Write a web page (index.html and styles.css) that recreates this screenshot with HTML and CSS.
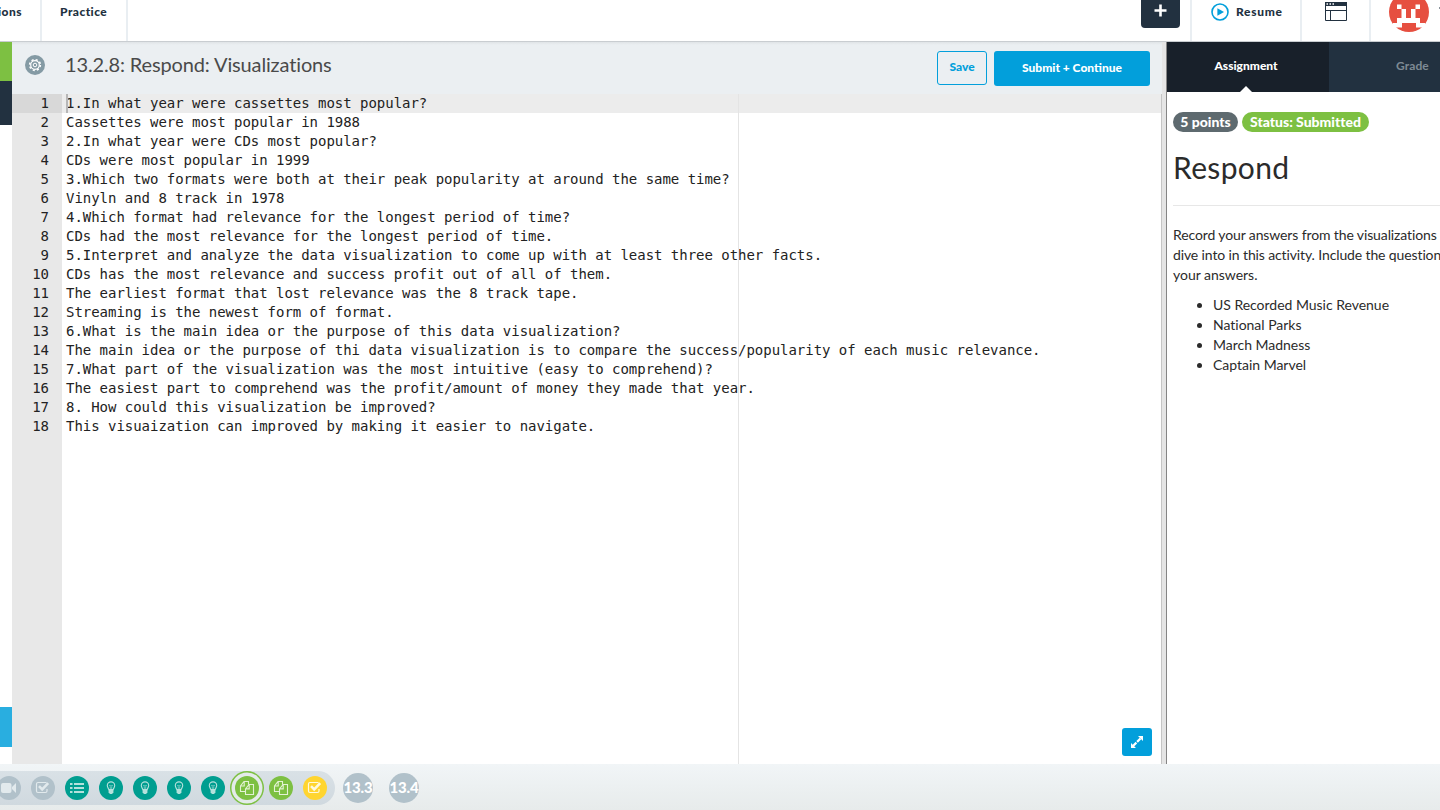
FILE: index.html
```html
<!DOCTYPE html>
<html lang="en">
<head>
<meta charset="utf-8">
<title>13.2.8: Respond: Visualizations</title>
<link rel="stylesheet" href="styles.css">
</head>
<body>
<svg class="defs" width="0" height="0">
  <symbol id="bulb" viewBox="0 0 24 24">
    <path d="M9.800 13.600C9.600 12.200 8.300 11.600 8.300 9.600a3.700 3.700 0 0 1 7.400 0c0 2-1.300 2.600-1.500 4z" fill="none" stroke="currentColor" stroke-width="1.100"/>
    <path d="M10.200 9.200l1 1 .8-1 .8 1 1-1M11.300 10.500v3M12.700 10.500v3" fill="none" stroke="currentColor" stroke-width=".6"/>
    <path d="M9.600 14h4.800v2.500l-1.400 1.400h-2l-1.400-1.400z" fill="currentColor"/>
  </symbol>
  <symbol id="check" viewBox="0 0 24 24">
    <path d="M15.500 6.500H7A1.500 1.500 0 0 0 5.500 8v7A1.500 1.500 0 0 0 7 16.500h7.500A1.500 1.500 0 0 0 16 15v-2" fill="none" stroke="currentColor" stroke-width="1.200"/>
    <path d="M8 10.200l3.200 3.200 6-6.200" fill="none" stroke="currentColor" stroke-width="2.600"/>
  </symbol>
  <symbol id="copy" viewBox="0 0 24 24">
    <path d="M10.500 15.500H5.500v-5.500l3.500-4.500h4.500v3M9.200 5.800v4.200H5.500M10.500 18.500v-5.600l3.600-4.400h4.400v10zM14.200 9v3.900h-3.700" fill="none" stroke="currentColor" stroke-width="1.100"/>
  </symbol>
</svg>

<header class="topbar">
  <div class="nav-item nav-clipped"><span>ions</span></div>
  <div class="nav-item nav-practice"><span>Practice</span></div>
  <div class="nav-space"></div>
  <div class="add"><svg width="13" height="13" viewBox="0 0 13 13"><path d="M6.500 .5v12M.5 6.500h12" stroke="#fff" stroke-width="2.600"/></svg></div>
  <div class="nav-item resume">
    <svg width="18" height="18" viewBox="0 0 18 18"><circle cx="9" cy="9" r="8" fill="none" stroke="#029fdb" stroke-width="1.600"/><path d="M6.400 5.200v7.600L13 9z" fill="#029fdb"/></svg>
    <span>Resume</span>
  </div>
  <div class="nav-item layout-icon">
    <svg width="22" height="19" viewBox="0 0 22 19"><path d="M0 0h22v4H0z" fill="#223140"/><path d="M.5 4v14.500h21V4M0 8.500h22M5.500 8.500v10" fill="none" stroke="#223140"/><path d="M1.500 2h1.500M4.500 2H6M7.500 2H9" stroke="#fff" stroke-width="1.500"/></svg>
  </div>
  <div class="avatar">
    <svg width="40" height="40" viewBox="0 0 40 40"><circle cx="20" cy="20" r="20" fill="#e64f40"/>
      <path d="M8 12.500h4.500V17H17v9h5v-9h4.500v-4.500H31V17h-4.500v9H31v5h5v4.500h-9V31H13v4.500H4V31h4v-5h4.500v-9H8z" fill="#fff"/>
    </svg>
    <i class="name-edge"></i>
  </div>
</header>

<main class="workspace">
  <aside class="rail"><i class="rail-green"></i><i class="rail-dark"></i><i class="rail-space"></i><i class="rail-blue"></i></aside>
  <section class="editor">
    <div class="toolbar">
      <span class="gear"><svg width="20" height="20" viewBox="0 0 20 20"><circle cx="10" cy="10" r="4.300" fill="none" stroke="#fff" stroke-width="1.200"/><circle cx="10" cy="10" r="5.400" fill="none" stroke="#fff" stroke-width="1.500" stroke-dasharray="2.120 2.120"/><circle cx="10" cy="10" r="1.800" fill="none" stroke="#fff"/></svg></span>
      <h1>13.2.8: Respond: Visualizations</h1>
      <span class="save">Save</span>
      <span class="submit">Submit + Continue</span>
    </div>
    <div class="code">
      <ol class="gutter"><li class="current">1</li><li>2</li><li>3</li><li>4</li><li>5</li><li>6</li><li>7</li><li>8</li><li>9</li><li>10</li><li>11</li><li>12</li><li>13</li><li>14</li><li>15</li><li>16</li><li>17</li><li>18</li></ol>
      <div class="lines">
        <p class="current">1.In what year were cassettes most popular?</p>
        <p>Cassettes were most popular in 1988</p>
        <p>2.In what year were CDs most popular?</p>
        <p>CDs were most popular in 1999</p>
        <p>3.Which two formats were both at their peak popularity at around the same time?</p>
        <p>Vinyln and 8 track in 1978</p>
        <p>4.Which format had relevance for the longest period of time?</p>
        <p>CDs had the most relevance for the longest period of time.</p>
        <p>5.Interpret and analyze the data visualization to come up with at least three other facts.</p>
        <p>CDs has the most relevance and success profit out of all of them.</p>
        <p>The earliest format that lost relevance was the 8 track tape.</p>
        <p>Streaming is the newest form of format.</p>
        <p>6.What is the main idea or the purpose of this data visualization?</p>
        <p>The main idea or the purpose of thi data visualization is to compare the success/popularity of each music relevance.</p>
        <p>7.What part of the visualization was the most intuitive (easy to comprehend)?</p>
        <p>The easiest part to comprehend was the profit/amount of money they made that year.</p>
        <p>8. How could this visualization be improved?</p>
        <p>This visuaization can improved by making it easier to navigate.</p>
        <i class="cursor"></i><i class="margin-line"></i>
        <span class="expand"><svg width="12" height="12" viewBox="0 0 12 12"><path d="M7 0h5v5zM0 7v5h5z" fill="#fff"/><path d="M2 10l8-8" stroke="#fff" stroke-width="2.200" stroke-dasharray="4.800 1"/></svg></span>
      </div>
    </div>
  </section>
  <div class="splitter"></div>
  <section class="panel">
    <nav class="tabs"><span class="tab active">Assignment</span><span class="tab grade">Grade</span></nav>
    <div class="details">
      <div class="badges"><span class="badge points">5 points</span><span class="badge status">Status: Submitted</span></div>
      <h2>Respond</h2>
      <div class="intro"><p class="l1">Record your answers from the visualizations</p><p class="l2">dive into in this activity. Include the question</p><p>your answers.</p></div>
      <ul><li>US Recorded Music Revenue</li><li>National Parks</li><li>March Madness</li><li>Captain Marvel</li></ul>
    </div>
  </section>
</main>

<footer class="progress">
  <div class="steps">
    <span class="step muted"><svg viewBox="0 0 24 24"><rect x="4" y="7" width="10.500" height="10" rx="2" fill="currentColor"/><path d="M15 11l4-4v10l-4-4z" fill="currentColor"/></svg></span>
    <span class="step muted"><svg><use href="#check"/></svg></span>
    <span class="step teal list"><svg viewBox="0 0 24 24"><path d="M5 8h2.500M5 12h2.500M5 16h2.500M9 8h10M9 12h10M9 16h10" stroke="currentColor" stroke-width="2"/></svg></span>
    <span class="step teal"><svg><use href="#bulb"/></svg></span>
    <span class="step teal"><svg><use href="#bulb"/></svg></span>
    <span class="step teal"><svg><use href="#bulb"/></svg></span>
    <span class="step teal"><svg><use href="#bulb"/></svg></span>
    <span class="step green selected"><svg><use href="#copy"/></svg></span>
    <span class="step green"><svg><use href="#copy"/></svg></span>
    <span class="step yellow"><svg><use href="#check"/></svg></span>
  </div>
  <span class="chapter">13.3</span>
  <span class="chapter">13.4</span>
</footer>
</body>
</html>
```
FILE: styles.css
```css
* { box-sizing: border-box; }
body { margin: 0; width: 1440px; height: 810px; overflow: hidden; display: flex; flex-direction: column; background: #fff; font-family: Lato, "Open Sans", sans-serif; color: #2b2b2b; }
svg { display: block; flex: none; }
.defs { position: absolute; }
h1, h2, p, ul, ol { margin: 0; padding: 0; font-weight: 400; }

.topbar { height: 42px; flex: none; display: flex; overflow: hidden; border-bottom: 1px solid #c9cdd1; color: #223140; font-size: 12px; font-weight: 900; }
.nav-item { height: 42px; border-right: 2px solid #e9eef2; line-height: 23px; letter-spacing: .45px; }
.nav-clipped { width: 42px; display: flex; justify-content: flex-end; padding-right: 18px; overflow: hidden; }
.nav-practice { width: 86px; padding-left: 18px; }
.nav-space { flex: 1; }
.add { width: 39px; height: 28px; background: #223140; border-radius: 0 0 4px 4px; display: flex; justify-content: center; padding-top: 4px; margin-right: 10px; }
.resume { width: 112px; border-left: 2px solid #e9eef2; display: flex; padding-left: 19px; gap: 7px; letter-spacing: .7px; }
.resume svg { margin-top: 3px; }
.layout-icon { width: 69px; padding: 2px 0 0 23px; }
.avatar { width: 69px; padding-left: 18px; display: flex; }
.avatar svg { margin-top: -8px; }
.name-edge { width: 1px; height: 2px; margin: 7px 0 0 10px; background: #8a939b; }

.workspace { height: 722px; flex: none; display: flex; }
.rail { width: 12px; flex: none; display: flex; flex-direction: column; }
.rail-green { height: 39px; background: #7dc042; }
.rail-dark { height: 44px; background: #223140; }
.rail-space { height: 582px; }
.rail-blue { height: 40px; background: #29aee0; }

.editor { width: 1150px; flex: none; display: flex; flex-direction: column; }
.toolbar { height: 52px; background: linear-gradient(#e0e4e7, #ebeff2 3px); display: flex; align-items: flex-start; padding: 9px 12px 0 13px; }
.gear { width: 20px; height: 20px; margin-top: 4px; border-radius: 50%; background: #849aa4; }
h1 { flex: 1; margin-left: 20px; font-size: 20px; line-height: 27px; color: #4a4a4a; letter-spacing: -.14px; white-space: nowrap; }
.save, .submit { font-size: 12px; font-weight: 900; text-align: center; border-radius: 3px; }
.save { width: 50px; height: 34px; line-height: 30px; border: 1px solid #029fdb; color: #029fdb; }
.submit { width: 156px; height: 35px; line-height: 34px; margin-left: 7px; background: #029fdb; color: #fff; }

.code { flex: 1; display: flex; font: 14px/19px "DejaVu Sans Mono", monospace; letter-spacing: -.028px; color: #222; }
.gutter { width: 50px; background: #e8e8e8; list-style: none; text-align: right; }
.gutter li { height: 19px; padding-right: 13px; }
.gutter .current { background: #d8d8d8; }
.lines { position: relative; flex: 1; border-right: 1px solid #c5c5c5; }
.lines p { height: 19px; padding-left: 4px; white-space: pre; }
.lines .current { background: #ececec; }
.cursor { position: absolute; left: 4px; top: 0; width: 2px; height: 19px; background: #b7b7b7; }
.margin-line { position: absolute; left: 676px; top: 0; width: 1px; height: 100%; background: #e4e4e4; }
.expand { position: absolute; right: 9px; bottom: 8px; width: 30px; height: 28px; border-radius: 3px; background: #029fdb; display: flex; align-items: center; justify-content: center; }

.splitter { width: 5px; flex: none; background: #e5e5e5; border-right: 1px solid #858585; }
.panel { flex: 1; overflow: hidden; }
.tabs { height: 50px; display: flex; background: #223140; font-size: 12px; font-weight: 900; line-height: 48px; }
.tab.active { width: 162px; padding-right: 4px; text-align: center; color: #fff; background: #18202a; position: relative; }
.tab.active::after { content: ""; position: absolute; left: 73px; bottom: 0; border: 6px solid transparent; border-top: 0; border-bottom-color: #fff; }
.grade { padding-left: 67px; font-weight: 700; color: #7e8a94; letter-spacing: .1px; }
.details { padding: 20px 0 0 6px; font-size: 14px; line-height: 20px; letter-spacing: -.02px; white-space: nowrap; }
.badges { display: flex; gap: 4px; }
.badge { height: 20px; line-height: 19px; border-radius: 10px; color: #fff; font-weight: 900; text-align: center; }
.points { width: 65px; background: #5e6a6f; }
.status { width: 127px; background: #7dc042; }
h2 { margin-top: 16px; height: 58px; border-bottom: 1px solid #e7e7e7; font-size: 30px; line-height: 38px; letter-spacing: .35px; }
.intro { margin-top: 19px; }
.l1, .l2 { letter-spacing: -.12px; }
ul { padding: 10px 0 0 40px; }

.progress { height: 46px; flex: none; display: flex; align-items: center; background: linear-gradient(#f1f5f7, #e7ebeb); padding-top: 2px; }
.steps { width: 335px; height: 34px; flex: none; display: flex; align-items: center; gap: 10px; border-radius: 0 17px 17px 0; background: linear-gradient(#d9e1e6, #d0d9df); }
.step { width: 24px; height: 24px; flex: none; border-radius: 50%; color: #e2eaed; }
.step:first-child { margin-left: -3px; }
.step svg { width: 24px; height: 24px; }
.muted { background: #b1c1ca; }
.teal { background: #009e90; color: #b5e1dc; }
.green { background: #7dc042; color: #e3f2d5; }
.yellow { background: #ffd530; color: #fff9de; }
.selected { box-shadow: 0 0 0 3.500px #e4ebe9, 0 0 0 5px #7dc042; }
.chapter { width: 30px; height: 30px; flex: none; margin-left: 8px; border-radius: 50%; background: #b1c1ca; color: #fff; font-size: 15px; font-weight: 900; letter-spacing: -.2px; line-height: 29px; display: flex; justify-content: center; }
.chapter + .chapter { margin-left: 16px; }
```
